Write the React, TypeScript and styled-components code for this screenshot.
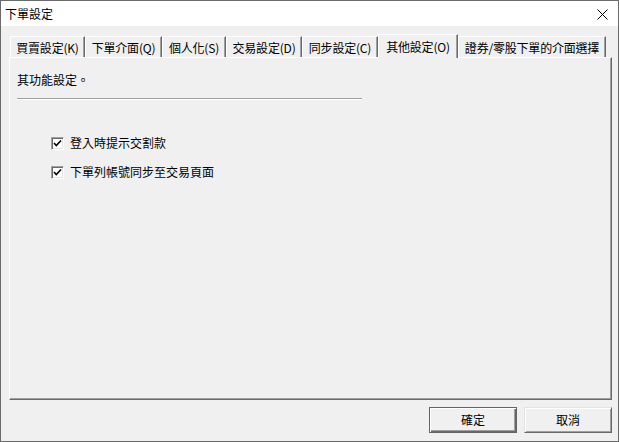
import React from "react";
import styled, { createGlobalStyle } from "styled-components";

const Global = createGlobalStyle`
  html, body { margin: 0; padding: 0; background: #f0f0f0; }
  body { font-family: "Noto Sans CJK TC", "Microsoft JhengHei", sans-serif; font-size: 12px; color: #000; }
  * { box-sizing: border-box; }
`;

const Window = styled.div`
  width: 619px;
  height: 442px;
  border: 1px solid #6b6b6b;
  background: #f0f0f0;
  display: flex;
  flex-direction: column;
`;

const TitleBar = styled.div`
  height: 25px;
  background: #ffffff;
  display: flex;
  align-items: center;
  justify-content: space-between;
  padding: 0 10px 0 4px;
  font-size: 12px;
  line-height: 16px;
`;

const CloseButton = styled.div`
  width: 12px;
  height: 12px;
  display: flex;
  align-items: center;
  justify-content: center;
  margin-top: 1px;
`;

const Body = styled.div`
  flex: 1;
  padding: 8px 6px 0 8px;
  display: flex;
  flex-direction: column;
`;

const TabRow = styled.div`
  height: 23px;
  display: flex;
  align-items: flex-end;
  padding-left: 1px;
  position: relative;
  z-index: 1;
`;

const Tab = styled.div<{ $w: number; $active?: boolean }>`
  width: ${(p) => p.$w}px;
  height: ${(p) => (p.$active ? 24 : 21)}px;
  margin-bottom: ${(p) => (p.$active ? -1 : 0)}px;
  background: #f0f0f0;
  border-top: 1px solid #ffffff;
  border-left: 1px solid #ffffff;
  border-right: 1px solid #696969;
  box-shadow: inset -1px 0 0 #a0a0a0;
  display: flex;
  align-items: center;
  justify-content: center;
  padding-top: ${(p) => (p.$active ? 0 : 2)}px;
  font-size: 12px;
  line-height: 16px;
  white-space: nowrap;
  letter-spacing: -0.2px;
`;

const Panel = styled.div`
  width: 603px;
  height: 343px;
  border-top: 1px solid #ffffff;
  border-left: 1px solid #ffffff;
  border-right: 1px solid #696969;
  border-bottom: 1px solid #696969;
  box-shadow: inset -1px -1px 0 #a0a0a0;
  padding: 14px 7px 0 7px;
  display: flex;
  flex-direction: column;
`;

const Heading = styled.div`
  font-size: 12px;
  line-height: 16px;
`;

const Separator = styled.div`
  width: 345px;
  height: 2px;
  margin-top: 10px;
  border-top: 1px solid #a0a0a0;
  border-bottom: 1px solid #ffffff;
`;

const Options = styled.div`
  display: flex;
  flex-direction: column;
  gap: 13px;
  padding: 35px 0 0 34px;
`;

const OptionRow = styled.label`
  display: flex;
  align-items: center;
  gap: 6px;
  height: 16px;
  font-size: 12px;
  line-height: 16px;
`;

const Box = styled.span`
  width: 13px;
  height: 13px;
  background: #ffffff;
  border-top: 1px solid #a0a0a0;
  border-left: 1px solid #a0a0a0;
  border-right: 1px solid #ffffff;
  border-bottom: 1px solid #ffffff;
  box-shadow: inset 1px 1px 0 #696969, inset -1px -1px 0 #e3e3e3;
  display: flex;
  align-items: center;
  justify-content: center;
`;

const ButtonRow = styled.div`
  display: flex;
  justify-content: flex-end;
  gap: 7px;
  padding-top: 7px;
`;

const Button = styled.div<{ $default?: boolean }>`
  width: 88px;
  height: 26px;
  background: #f0f0f0;
  display: flex;
  align-items: center;
  justify-content: center;
  font-size: 12px;
  line-height: 16px;
  border: 1px solid;
  border-color: ${(p) => (p.$default ? "#646464" : "#e3e3e3 #696969 #696969 #e3e3e3")};
  box-shadow: ${(p) =>
    p.$default
      ? "inset 1px 1px 0 #ffffff, inset -1px -1px 0 #696969, inset -2px -2px 0 #a0a0a0"
      : "inset 1px 1px 0 #ffffff, inset -1px -1px 0 #a0a0a0"};
`;

const tabs = [
  { label: "買賣設定(K)", w: 75 },
  { label: "下單介面(Q)", w: 77 },
  { label: "個人化(S)", w: 64 },
  { label: "交易設定(D)", w: 76 },
  { label: "同步設定(C)", w: 76 },
  { label: "其他設定(O)", w: 80, active: true },
  { label: "證券/零股下單的介面選擇", w: 148 },
];

const options = ["登入時提示交割款", "下單列帳號同步至交易頁面"];

export default function App() {
  return (
    <>
      <Global />
      <Window>
        <TitleBar>
          <span>下單設定</span>
          <CloseButton>
            <svg width="11" height="11" viewBox="0 0 11 11">
              <path d="M0.5 0.5 L10.5 10.5 M10.5 0.5 L0.5 10.5" stroke="#000" strokeWidth="1" fill="none" />
            </svg>
          </CloseButton>
        </TitleBar>
        <Body>
          <TabRow>
            {tabs.map((t) => (
              <Tab key={t.label} $w={t.w} $active={t.active}>
                {t.label}
              </Tab>
            ))}
          </TabRow>
          <Panel>
            <Heading>其功能設定。</Heading>
            <Separator />
            <Options>
              {options.map((o) => (
                <OptionRow key={o}>
                  <Box>
                    <svg width="9" height="9" viewBox="0 0 9 9">
                      <path d="M1 4 L3.3 6.5 L8 1.5" stroke="#000" strokeWidth="1.6" fill="none" />
                    </svg>
                  </Box>
                  {o}
                </OptionRow>
              ))}
            </Options>
          </Panel>
          <ButtonRow>
            <Button $default>確定</Button>
            <Button>取消</Button>
          </ButtonRow>
        </Body>
      </Window>
    </>
  );
}
